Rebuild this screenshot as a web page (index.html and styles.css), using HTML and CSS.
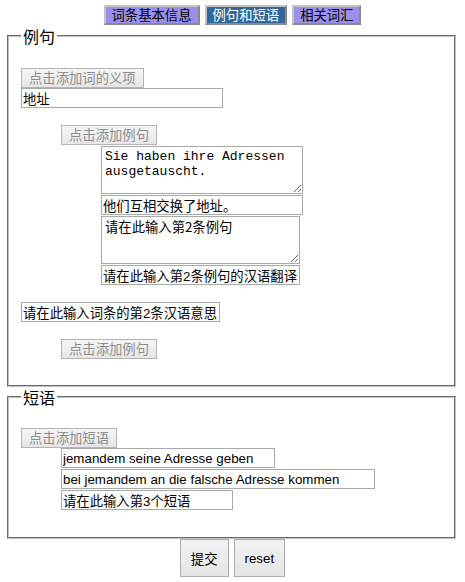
FILE: index.html
```html
<!DOCTYPE html>
<html lang="zh">
<head>
<meta charset="utf-8">
<title>例句和短语</title>
<link rel="stylesheet" href="styles.css">
</head>
<body>
<div class="tabs">
  <span class="tab">词条基本信息</span>
  <span class="tab tab-active">例句和短语</span>
  <span class="tab">相关词汇</span>
</div>
<form class="form">
  <fieldset class="box box-examples">
    <legend class="legend">例句</legend>
    <button type="button" class="btn-add first" disabled>点击添加词的义项</button>
    <input class="field w202" type="text" value="地址">
    <button type="button" class="btn-add lvl1 gap-btn" disabled>点击添加例句</button>
    <textarea class="area lvl2 w202">Sie haben ihre Adressen ausgetauscht.</textarea>
    <input class="field lvl2 w202 gap1" type="text" value="他们互相交换了地址。">
    <textarea class="area area-cjk lvl2 w199 gap1">请在此输入第2条例句</textarea>
    <input class="field lvl2 w199 gap1" type="text" value="请在此输入第2条例句的汉语翻译">
    <input class="field w199 gap-sense" type="text" value="请在此输入词条的第2条汉语意思">
    <button type="button" class="btn-add lvl1 gap-btn" disabled>点击添加例句</button>
  </fieldset>
  <fieldset class="box box-phrases">
    <legend class="legend">短语</legend>
    <button type="button" class="btn-add first2" disabled>点击添加短语</button>
    <input class="field lvl1 w214" type="text" value="jemandem seine Adresse geben">
    <input class="field lvl1 w314 gap1" type="text" value="bei jemandem an die falsche Adresse kommen">
    <input class="field lvl1 w172 gap1" type="text" value="请在此输入第3个短语">
  </fieldset>
  <div class="actions">
    <button type="button" class="btn-main">提交</button>
    <button type="reset" class="btn-main">reset</button>
  </div>
</form>
</body>
</html>
```

FILE: styles.css
```css
html, body {
  margin: 0;
  padding: 0;
  background: #ffffff;
}
body {
  font-family: "Liberation Sans", "Noto Sans CJK SC", sans-serif;
  font-size: 13.33px;
  color: #000;
}
.tabs {
  display: flex;
  justify-content: center;
  gap: 5px;
  padding-top: 5px;
}
.tab {
  display: block;
  box-sizing: border-box;
  height: 20px;
  line-height: 16px;
  padding: 0 6px;
  font-family: "Noto Sans CJK SC", sans-serif;
  font-size: 13.33px;
  background: #9b8fe9;
  color: #000;
  border: 2px solid;
  border-color: #c4c4c4 #8a8a8a #8a8a8a #c4c4c4;
}
.tab-active {
  background: #336699;
  color: #fff;
}
.form {
  margin: 0;
}
.box {
  margin: 1px 9px 0 7px;
  padding: 0 12px 26px 12px;
  border: 2px groove #c0c0c0;
  min-width: 0;
}
.box-phrases {
  margin-top: 0;
  padding-bottom: 27px;
}
.legend {
  font-family: "Noto Sans CJK SC", sans-serif;
  font-size: 16px;
  line-height: 20px;
  padding: 0 2px;
}
.btn-add {
  display: block;
  box-sizing: border-box;
  height: 20px;
  padding: 0 7px;
  margin: 0;
  font-family: "Noto Sans CJK SC", sans-serif;
  font-size: 13.33px;
  line-height: 16px;
  color: #8e8e8e;
  background: linear-gradient(#f5f5f5, #e6e6e6);
  border: 1px solid #b4b4b4;
  border-radius: 0;
}
.first { margin-top: 22px; }
.first2 { margin-top: 21px; }
.gap-btn { margin-top: 17px; }
.gap-sense { margin-top: 17px; }
.gap1 { margin-top: 1px; }
.lvl1 { margin-left: 40px; }
.lvl2 { margin-left: 80px; }
.field {
  display: block;
  box-sizing: border-box;
  height: 20px;
  padding: 0 1px;
  font-family: "Liberation Sans", "Noto Sans CJK SC", sans-serif;
  font-size: 13.33px;
  line-height: 18px;
  color: #000;
  background: #fff;
  border: 1px solid #a9a9a9;
  border-radius: 0;
  outline: none;
}
.area {
  display: block;
  box-sizing: border-box;
  height: 48px;
  padding: 2px 3px;
  margin-top: 1px;
  font-family: "Liberation Mono", "Noto Sans CJK SC", monospace;
  font-size: 13px;
  line-height: 15px;
  color: #000;
  background: #fff;
  border: 1px solid #a9a9a9;
  border-radius: 0;
  resize: both;
}
.area-cjk {
  font-family: "Noto Sans CJK SC", sans-serif;
  font-size: 13.33px;
  line-height: 16px;
}
.w202 { width: 202px; }
.w199 { width: 199px; }
.w214 { width: 214px; }
.w314 { width: 314px; }
.w172 { width: 172px; }
.actions {
  display: flex;
  justify-content: center;
  gap: 5px;
  margin-top: 0;
}
.btn-main {
  box-sizing: border-box;
  height: 38px;
  padding: 0 10px;
  font-family: "Liberation Sans", "Noto Sans CJK SC", sans-serif;
  font-size: 13.33px;
  color: #000;
  background: linear-gradient(#f2f2f2, #e4e4e4);
  border: 1px solid #adadad;
  border-radius: 0;
}
```
